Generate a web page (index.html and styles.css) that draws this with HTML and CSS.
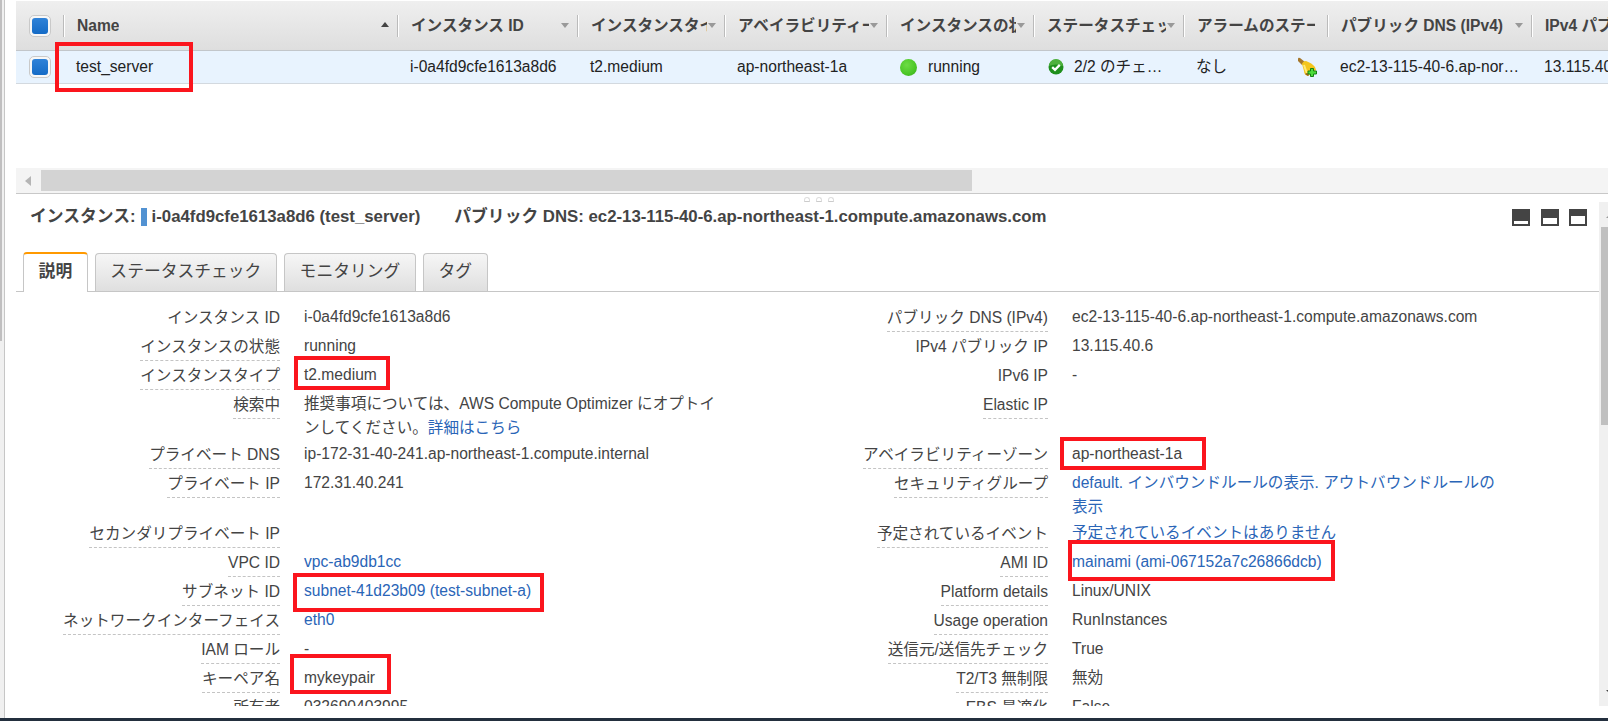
FILE: index.html
```html
<!DOCTYPE html>
<html lang="ja">

<head>
	<meta charset="UTF-8">
	<title>インスタンス</title>
	<link rel="stylesheet" href="styles.css">
</head>

<body>
	<div class="page">
		<div class="side">
			<div class="side-thumb"></div>
		</div>
		<div class="main">
			<div class="list">
				<div class="row head">
					<div class="check"><i></i></div>
					<div class="cell"><span>Name</span><b class="up"></b></div>
					<div class="cell"><span>インスタンス ID</span><b></b></div>
					<div class="cell"><span>インスタンスタイプ</span><b></b></div>
					<div class="cell"><span>アベイラビリティーゾーン</span><b></b></div>
					<div class="cell"><span>インスタンスの状態</span><b></b></div>
					<div class="cell"><span>ステータスチェック</span><b></b></div>
					<div class="cell nosort"><span>アラームのステータス</span></div>
					<div class="cell"><span>パブリック DNS (IPv4)</span><b></b></div>
					<div class="cell nosort"><span>IPv4 パブリック IP</span></div>
				</div>
				<div class="row item">
					<div class="check"><i></i></div>
					<div class="cell">test_server</div>
					<div class="cell">i-0a4fd9cfe1613a8d6</div>
					<div class="cell">t2.medium</div>
					<div class="cell">ap-northeast-1a</div>
					<div class="cell"><em class="green"></em>running</div>
					<div class="cell">
						<svg class="ok" width="16" height="16" viewBox="0 0 16 16">
							<circle cx="8" cy="8" r="7.5" fill="#1f8f1c" />
							<path d="M1 7a7 7 0 0 1 14 0Q8 4 1 7z" fill="#4fb13e" />
							<path d="M4.2 8.2l2.8 2.7 4.8-5" fill="none" stroke="#fff" stroke-width="2.3" />
						</svg>2/2 のチェ…
					</div>
					<div class="cell alarm">なし
						<svg width="20" height="20" viewBox="0 0 20 20">
							<path d="M1 2Q1 0 3 1L8 5 5 8 1 4z" fill="#a5772b" />
							<path d="M5 7Q6 4 9 4q6 2 9 6l1 3-8 6q-4-1-4-5z" fill="#f4c51d" />
							<path d="M7 8q2 6 3 8" fill="none" stroke="#ffea78" stroke-width="2" />
							<path d="M8 17l2-1 2 2-1 1z" fill="#8b5f1e" />
							<path d="M13.5 11.500h3v2.500h3v3h-3v2.500h-3V17h-2.500v-3h2.500z" fill="#4cdc3a" stroke="#148312" />
						</svg>
					</div>
					<div class="cell">ec2-13-115-40-6.ap-nor…</div>
					<div class="cell">13.115.40.6</div>
				</div>
				<div class="space"></div>
				<div class="hscroll">
					<div class="arrow-left"></div>
					<div class="hthumb"></div>
				</div>
			</div>

			<div class="detail">
				<div class="content">
					<div class="grip"><i></i><i></i><i></i></div>
					<div class="title">
						<span>インスタンス:</span>
						<i class="bar"></i>
						<span class="name">i-0a4fd9cfe1613a8d6 (test_server)</span>
						<span>パブリック DNS: ec2-13-115-40-6.ap-northeast-1.compute.amazonaws.com</span>
						<div class="sizes"><i class="s"></i><i class="m"></i><i class="l"></i></div>
					</div>
					<div class="tabs">
						<div class="tab active">説明</div>
						<div class="tab">ステータスチェック</div>
						<div class="tab">モニタリング</div>
						<div class="tab">タグ</div>
					</div>
					<div class="info">
						<dl>
							<dt class="plain"><span>インスタンス ID</span></dt>
							<dd>i-0a4fd9cfe1613a8d6</dd>
							<dt><span>インスタンスの状態</span></dt>
							<dd>running</dd>
							<dt><span>インスタンスタイプ</span></dt>
							<dd>t2.medium</dd>
							<dt><span>検索中</span></dt>
							<dd>推奨事項については、AWS Compute Optimizer にオプトインしてください。<a>詳細はこちら</a></dd>
							<dt><span>プライベート DNS</span></dt>
							<dd>ip-172-31-40-241.ap-northeast-1.compute.internal</dd>
							<dt><span>プライベート IP</span></dt>
							<dd>172.31.40.241</dd>
							<dt><span>セカンダリプライベート IP</span></dt>
							<dd></dd>
							<dt><span>VPC ID</span></dt>
							<dd><a>vpc-ab9db1cc</a></dd>
							<dt><span>サブネット ID</span></dt>
							<dd><a>subnet-41d23b09 (test-subnet-a)</a></dd>
							<dt><span>ネットワークインターフェイス</span></dt>
							<dd><a>eth0</a></dd>
							<dt><span>IAM ロール</span></dt>
							<dd>-</dd>
							<dt><span>キーペア名</span></dt>
							<dd>mykeypair</dd>
							<dt><span>所有者</span></dt>
							<dd>032690403995</dd>
						</dl>
						<dl class="right">
							<dt><span>パブリック DNS (IPv4)</span></dt>
							<dd>ec2-13-115-40-6.ap-northeast-1.compute.amazonaws.com</dd>
							<dt class="plain"><span>IPv4 パブリック IP</span></dt>
							<dd>13.115.40.6</dd>
							<dt class="plain"><span>IPv6 IP</span></dt>
							<dd>-</dd>
							<dt><span>Elastic IP</span></dt>
							<dd></dd>
							<dt><span>アベイラビリティーゾーン</span></dt>
							<dd>ap-northeast-1a</dd>
							<dt><span>セキュリティグループ</span></dt>
							<dd><a>default. インバウンドルールの表示. アウトバウンドルールの表示</a></dd>
							<dt><span>予定されているイベント</span></dt>
							<dd><a>予定されているイベントはありません</a></dd>
							<dt><span>AMI ID</span></dt>
							<dd><a>mainami (ami-067152a7c26866dcb)</a></dd>
							<dt><span>Platform details</span></dt>
							<dd>Linux/UNIX</dd>
							<dt><span>Usage operation</span></dt>
							<dd>RunInstances</dd>
							<dt><span>送信元/送信先チェック</span></dt>
							<dd>True</dd>
							<dt><span>T2/T3 無制限</span></dt>
							<dd>無効</dd>
							<dt><span>EBS 最適化</span></dt>
							<dd>False</dd>
						</dl>
					</div>
				</div>
				<div class="vscroll">
					<div class="varrow up"></div>
					<div class="vthumb"></div>
					<div class="varrow down"></div>
				</div>
			</div>
		</div>
	</div>
	<div class="footer"></div>

	<!-- red marks over the values -->
	<div class="mark mark-name"></div>
	<div class="mark mark-type"></div>
	<div class="mark mark-subnet"></div>
	<div class="mark mark-key"></div>
	<div class="mark mark-zone"></div>
	<div class="mark mark-ami"></div>
</body>

</html>
```

FILE: styles.css
```css
* {
	box-sizing: border-box;
}

body {
	margin: 0;
	height: 721px;
	overflow: hidden;
	position: relative;
	background: #fff;
	color: #444;
	font: 15.6px/23.4px "Liberation Sans", "Noto Sans CJK JP", sans-serif;
}

.page {
	display: flex;
	height: 718px;
}

.footer {
	height: 3px;
	background: #232f3e;
}

.side {
	width: 5px;
	margin-right: 11px;
	background: #f0f0f0;
	border-right: 1px solid #c6c6c6;
	flex: none;
}

.side-thumb {
	width: 2px;
	height: 341px;
	background: #c0bfc0;
}

.main {
	width: 1592px;
	overflow: hidden;
}

/* list */
.list {
	height: 194px;
	padding-top: 1px;
	display: flex;
	flex-direction: column;
	border-bottom: 1px solid #c8c8c8;
}

.row {
	display: grid;
	grid-template-columns: 47px 334px 180px 147px 162px 147px 150px 144px 204px 180px;
	align-items: center;
	white-space: nowrap;
}

.head {
	height: 50px;
	background: linear-gradient(#efefef, #dedede);
	border-bottom: 1px solid #c2c6ca;
	font-weight: bold;
}

.head .cell {
	display: flex;
	align-items: center;
	justify-content: space-between;
	height: 22px;
	padding: 0 8px 0 13px;
	border-left: 1px solid #bbb;
	box-shadow: inset 1px 0 #fff;
}

.head .cell span {
	overflow: hidden;
	margin-right: 1px;
}

.head .nosort {
	padding-right: 11px;
}

.head b {
	flex: none;
	border: 4.5px solid transparent;
	border-top: 5px solid #999;
	border-bottom: 0;
}

.head b.up {
	border-top: 0;
	border-bottom: 5px solid #444;
	margin-bottom: 3px;
}

.item {
	height: 33px;
	background: #e8f3fe;
	border-bottom: 1px solid #d3d9df;
	color: #222;
}

.item .cell {
	display: flex;
	align-items: center;
	padding-left: 13px;
}

.check {
	width: 22px;
	height: 22px;
	margin-left: 13px;
	padding: 2px;
	border: 1px solid #c9c9c9;
	border-radius: 5px;
	background: #f7f7f7;
}

.check i {
	display: block;
	width: 16px;
	height: 16px;
	border-radius: 3px;
	background: linear-gradient(#2f82d8, #156bc6);
}

.green {
	width: 17px;
	height: 17px;
	margin-left: 1px;
	margin-right: 11px;
	border-radius: 50%;
	background: radial-gradient(circle at 40% 35%, #6ddc45, #4bc626 60%, #36a317);
}

.ok {
	margin: 0 10px 0 2px;
}

.alarm svg {
	margin-left: auto;
	margin-right: 10px;
}

.space {
	flex: 1;
}

.hscroll {
	display: flex;
	align-items: center;
	height: 25px;
	background: #f4f4f4;
}

.arrow-left {
	margin: 0 10px 0 9px;
	border: 5.5px solid transparent;
	border-right: 6px solid #b5b5b5;
	border-left: 0;
}

.hthumb {
	width: 931px;
	height: 21px;
	background: #d3d3d3;
}

/* detail */
.detail {
	display: flex;
	height: 512px;
	overflow: hidden;
}

.content {
	width: 1583px;
}

.grip {
	display: flex;
	justify-content: center;
	gap: 6px;
	height: 13px;
	padding: 3px 0 0 23px;
}

.grip i {
	width: 6px;
	height: 5px;
	border: 1px solid #ddd;
	border-bottom-color: #ccc;
	border-radius: 3px 3px 0 0;
}

.title {
	display: flex;
	align-items: center;
	height: 20px;
	padding-left: 14px;
	font-size: 16.8px;
	font-weight: bold;
}

.bar {
	width: 6px;
	height: 18px;
	margin: 0 5px;
	background: #5292d2;
}

.name {
	margin-right: 34px;
}

/* pane size buttons */
.sizes {
	display: flex;
	gap: 10px;
	margin-left: auto;
	margin-right: 12px;
}

.sizes i {
	width: 18px;
	height: 17px;
	border: 2px solid #444;
	border-top-width: 12px;
}

.sizes .s {
	margin-right: 1px;
}

.sizes .m {
	border-top-width: 9px;
}

.sizes .l {
	border-top-width: 7px;
}

.tabs {
	display: flex;
	align-items: flex-end;
	gap: 7px;
	height: 65px;
	padding-left: 7px;
	border-bottom: 1px solid #c6c6c6;
}

.tab {
	height: 38px;
	padding: 0 14.6px;
	border: 1px solid #c6c6c6;
	border-bottom: 0;
	border-radius: 4px 4px 0 0;
	background: linear-gradient(#f6f6f6, #dfdfdf);
	font-size: 16.8px;
	line-height: 36px;
}

.tab.active {
	height: 40px;
	margin-bottom: -1px;
	border-top: 2px solid #f90;
	background: #fff;
	font-weight: bold;
}

.info {
	display: flex;
	padding-top: 11px;
}

dl {
	display: grid;
	grid-template-columns: 264px 425px;
	grid-template-rows: 29px 29px 29px 50px 29px 50px repeat(7, 29px);
	column-gap: 24px;
	margin: 0;
}

dl.right {
	margin-left: 55px;
}

dt {
	height: 29px;
	text-align: right;
	white-space: nowrap;
}

dt span {
	display: inline-block;
	height: 29px;
	padding-top: 3px;
	border-bottom: 1px dashed #c4c4c4;
}

dt.plain span {
	border-bottom: 0;
}

dd {
	margin: 0;
	padding-top: 2px;
	line-height: 24px;
}

a {
	color: #2a65b7;
}

.vscroll {
	flex: 1;
	margin-top: 8px;
	padding-left: 2px;
	background: #f0f0f0;
	display: flex;
	flex-direction: column;
	overflow: hidden;
}

.vthumb {
	height: 198px;
	margin-top: 9px;
	background: #c0c0c0;
}

.varrow {
	width: 12px;
	margin: 12px 0 0 5px;
	border: 4px solid transparent;
	border-top: 0;
	border-bottom-color: #999;
}

.varrow.down {
	margin: auto 0 12px 5px;
	border-top: 4px solid #444;
	border-bottom: 0;
}

/* marks */
.mark {
	position: absolute;
	border: 4px solid #fb151d;
}

.mark-name {
	left: 55px;
	top: 42px;
	width: 138px;
	height: 50px;
}

.mark-type {
	left: 294px;
	top: 356px;
	width: 96px;
	height: 34px;
}

.mark-subnet {
	left: 293px;
	top: 573px;
	width: 251px;
	height: 39px;
}

.mark-key {
	left: 290px;
	top: 654px;
	width: 101px;
	height: 40px;
}

.mark-zone {
	left: 1060px;
	top: 437px;
	width: 146px;
	height: 33px;
}

.mark-ami {
	left: 1068px;
	top: 540px;
	width: 267px;
	height: 41px;
}
```
